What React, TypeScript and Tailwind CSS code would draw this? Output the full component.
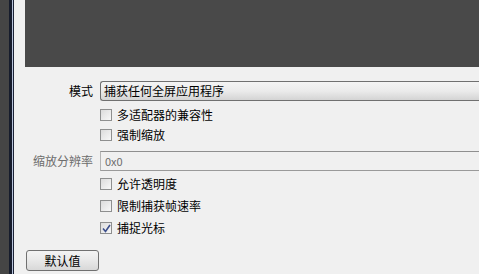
import React from 'react';

const font = { fontFamily: '"Noto Sans CJK SC", "Noto Sans", sans-serif' };

const Check = ({ checked = false }: { checked?: boolean }) => (
  <span className="flex h-[12px] w-[12px] shrink-0 items-center justify-center border border-[#8e8f8f] bg-gradient-to-br from-[#dcdcdc] to-[#f8f8f8]">
    {checked && (
      <svg width="9" height="9" viewBox="0 0 9 9">
        <path d="M1 4.5 L3.5 7.5 L8 1" fill="none" stroke="#3c4f8c" strokeWidth="1.6" />
      </svg>
    )}
  </span>
);

const CheckRow = ({ label, checked, h }: { label: string; checked?: boolean; h: string }) => (
  <div className={`flex items-center ${h}`}>
    <div className="w-[86px] shrink-0" />
    <Check checked={checked} />
    <span className="ml-[5px] text-[12px] leading-none text-black">{label}</span>
  </div>
);

export default function App() {
  return (
    <div className="flex h-[274px] w-[479px] overflow-hidden bg-[#f0f0f0]" style={font}>
      <div className="w-[9px] shrink-0 bg-[#454545]" />
      <div className="w-[3px] shrink-0 bg-[#161c2c]" />
      <div className="w-px shrink-0 bg-[#b8c4dc]" />
      <div className="w-px shrink-0 bg-[#1c2336]" />
      <div className="flex flex-1 flex-col">
        <div className="ml-[11px] h-[67px] shrink-0 bg-[#494949]" />

        <div className="mt-[14px] flex h-[20px] items-center">
          <span className="w-[80px] shrink-0 pr-[1px] text-right text-[12px] leading-none text-black">模式</span>
          <div className="ml-[6px] flex h-[20px] flex-1 items-center rounded-l-[3px] border border-r-0 border-[#707070] bg-gradient-to-b from-[#f4f4f4] via-[#ebebeb] to-[#d4d4d4] pl-[3px] text-[12px] leading-none text-black">
            捕获任何全屏应用程序
          </div>
        </div>

        <CheckRow label="多适配器的兼容性" h="h-[20px] mt-[4px]" />
        <CheckRow label="强制缩放" h="h-[20px]" />

        <div className="mt-[6px] flex h-[20px] items-center">
          <span className="w-[80px] shrink-0 pr-[1px] text-right text-[12px] leading-none text-[#6d6d6d]">缩放分辨率</span>
          <div className="ml-[6px] flex h-[20px] flex-1 items-center border border-r-0 border-[#b4b4b4] border-t-[#8f8f8f] border-b-[#9a9a9a] bg-[#f0f0f0] pl-[4px] text-[11px] leading-none text-[#6d6d6d]">
            0x0
          </div>
        </div>

        <CheckRow label="允许透明度" h="h-[22px] mt-[2px]" />
        <CheckRow label="限制捕获帧速率" h="h-[22px]" />
        <CheckRow label="捕捉光标" checked h="h-[22px]" />

        <button className="ml-[12px] mt-[11px] flex h-[21px] w-[73px] items-center justify-center rounded-[3px] border border-[#707070] bg-gradient-to-b from-[#f3f3f3] via-[#e8e8e8] to-[#d8d8d8] text-[12px] leading-none text-black">
          默认值
        </button>
      </div>
    </div>
  );
}
